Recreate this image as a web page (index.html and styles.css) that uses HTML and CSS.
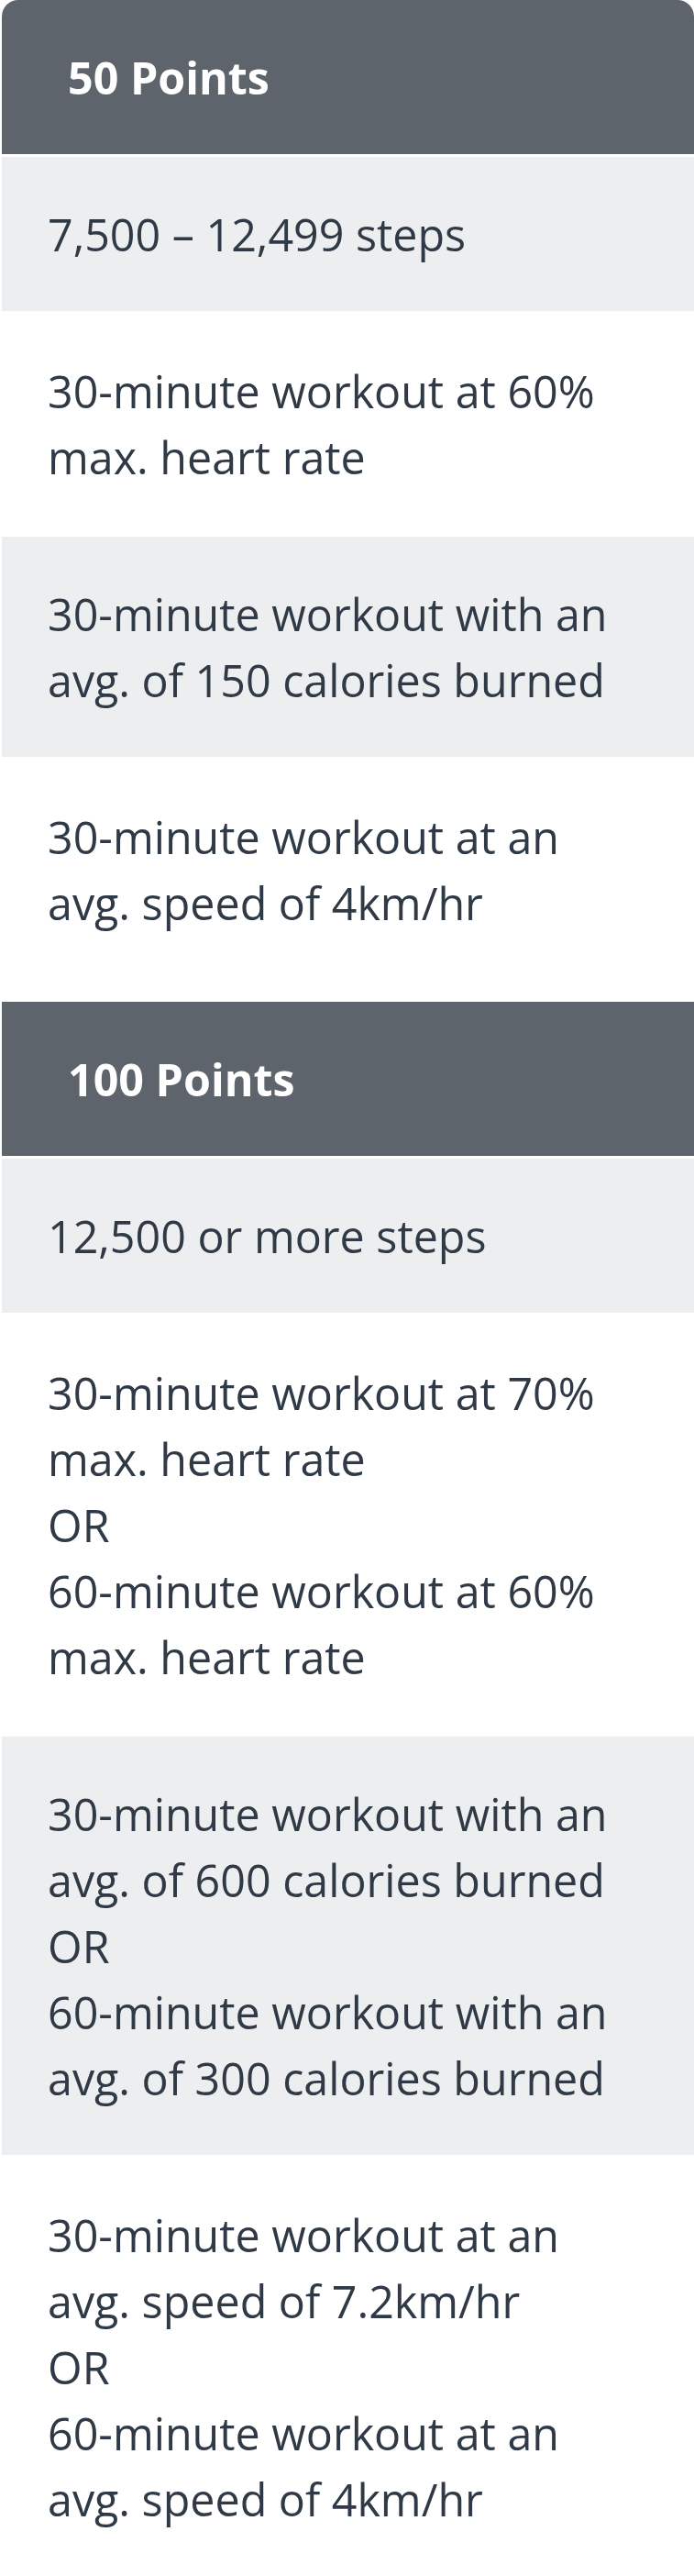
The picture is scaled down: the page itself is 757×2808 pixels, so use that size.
FILE: index.html
```html
<!DOCTYPE html>
<html lang="en">
<head>
<meta charset="utf-8">
<title>Points</title>
<link rel="stylesheet" href="styles.css">
</head>
<body>
<div class="page">
  <section class="tier tier-first">
    <div class="tier-head">50 Points</div>
    <div class="row row-alt">7,500 – 12,499 steps</div>
    <div class="row">30-minute workout at 60%<br>max. heart rate</div>
    <div class="row row-alt">30-minute workout with an<br>avg. of 150 calories burned</div>
    <div class="row">30-minute workout at an<br>avg. speed of 4km/hr</div>
  </section>
  <section class="tier">
    <div class="tier-head">100 Points</div>
    <div class="row row-alt">12,500 or more steps</div>
    <div class="row">30-minute workout at 70%<br>max. heart rate<br>OR<br>60-minute workout at 60%<br>max. heart rate</div>
    <div class="row row-alt">30-minute workout with an<br>avg. of 600 calories burned<br>OR<br>60-minute workout with an<br>avg. of 300 calories burned</div>
    <div class="row">30-minute workout at an<br>avg. speed of 7.2km/hr<br>OR<br>60-minute workout at an<br>avg. speed of 4km/hr</div>
  </section>
</div>
</body>
</html>
```

FILE: styles.css
```css
html, body {
  margin: 0;
  padding: 0;
  background: #ffffff;
}

.page {
  display: flex;
  flex-direction: column;
  gap: 24px;
  padding-left: 2px;
  font-family: "Open Sans", "Noto Sans", sans-serif;
  font-size: 48.4px;
  line-height: 72px;
  color: #2f3a46;
}

.tier {
  display: flex;
  flex-direction: column;
  gap: 3px;
}

.tier-first .tier-head {
  border-radius: 18px 18px 0 0;
}

.tier-head {
  background: #5d646c;
  color: #ffffff;
  font-weight: 700;
  padding: 48px 48px 48px 72px;
}

.row {
  background: #ffffff;
  padding: 48px 48px 48px 50px;
}

.row-alt {
  background: #edeef0;
}
```
